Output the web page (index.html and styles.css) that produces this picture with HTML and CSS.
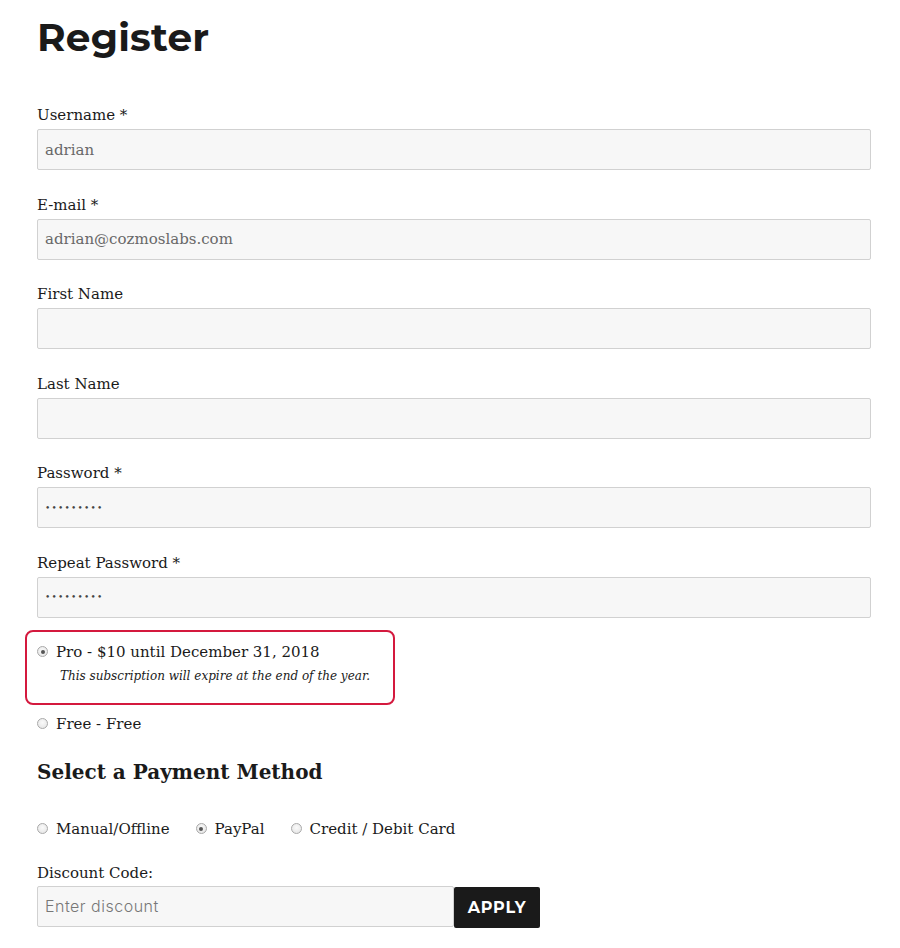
FILE: index.html
```html
<!DOCTYPE html>
<html lang="en">
<head>
<meta charset="utf-8">
<title>Register</title>
<link rel="stylesheet" href="styles.css">
</head>
<body>
<main class="page">
  <h1 class="title">Register</h1>
  <form class="form">
    <div class="field">
      <label class="label" for="u">Username *</label>
      <input class="input" id="u" type="text" value="adrian">
    </div>
    <div class="field">
      <label class="label" for="e">E-mail *</label>
      <input class="input" id="e" type="text" value="adrian@cozmoslabs.com">
    </div>
    <div class="field">
      <label class="label" for="f">First Name</label>
      <input class="input" id="f" type="text">
    </div>
    <div class="field">
      <label class="label" for="l">Last Name</label>
      <input class="input" id="l" type="text">
    </div>
    <div class="field">
      <label class="label" for="p">Password *</label>
      <input class="input pw" id="p" type="password" value="123456789">
    </div>
    <div class="field last">
      <label class="label" for="p2">Repeat Password *</label>
      <input class="input pw" id="p2" type="password" value="123456789">
    </div>

    <div class="plan highlighted">
      <label class="choice">
        <input class="radio" type="radio" name="plan" checked>
        <span>Pro - $10 until December 31, 2018</span>
      </label>
      <p class="plan-desc">This subscription will expire at the end of the year.</p>
    </div>
    <div class="plan plain">
      <label class="choice">
        <input class="radio" type="radio" name="plan">
        <span>Free - Free</span>
      </label>
    </div>

    <h2 class="subtitle">Select a Payment Method</h2>
    <div class="methods">
      <label class="choice"><input class="radio" type="radio" name="pay"><span>Manual/Offline</span></label>
      <label class="choice"><input class="radio" type="radio" name="pay" checked><span>PayPal</span></label>
      <label class="choice"><input class="radio" type="radio" name="pay"><span>Credit / Debit Card</span></label>
    </div>

    <div class="discount">
      <label class="label" for="d">Discount Code:</label>
      <div class="discount-row">
        <input class="input discount-input" id="d" type="text" placeholder="Enter discount">
        <button class="apply" type="button">APPLY</button>
      </div>
    </div>
  </form>
</main>
</body>
</html>
```

FILE: styles.css
```css
html, body {
  margin: 0;
  padding: 0;
  background: #fff;
}
body {
  font-family: "DejaVu Serif", "Liberation Serif", serif;
  color: #1a1a1a;
}
.page {
  padding: 0 29px 0 37px;
  width: 834px;
}
.title {
  font-family: "Montserrat", "Open Sans", "Inter", sans-serif;
  font-weight: 700;
  font-size: 39px;
  line-height: 44px;
  margin: 15px 0 0 0;
  letter-spacing: 0.2px;
  color: #1a1a1a;
}
.form {
  margin-top: 44px;
}
.field {
  margin-bottom: 22.5px;
}
.field.last {
  margin-bottom: 0;
}
.label {
  display: block;
  font-size: 15px;
  line-height: 24px;
  margin-bottom: 2px;
  color: #1a1a1a;
}
.input {
  display: block;
  box-sizing: border-box;
  width: 834px;
  height: 41px;
  margin: 0;
  padding: 0 7px;
  border: 1px solid #d1d1d1;
  border-radius: 2px;
  background: #f7f7f7;
  font-family: "DejaVu Serif", "Liberation Serif", serif;
  font-size: 15px;
  color: #686868;
  outline: none;
}
.input.pw {
  font-size: 9px;
  letter-spacing: 1.2px;
  color: #444;
}
.plan.highlighted {
  margin: 12px 0 0 -12px;
  width: 346px;
  border: 2px solid #d4193e;
  border-radius: 8px;
  padding: 8px 10px 16px 10px;
}
.choice {
  display: inline-flex;
  align-items: center;
  gap: 8px;
  font-size: 15px;
  line-height: 24px;
  color: #1a1a1a;
}
.plan-desc {
  margin: 1px 0 0 23px;
  font-size: 12px;
  font-style: italic;
  line-height: 22px;
  color: #1a1a1a;
}
.plan.plain {
  margin-top: 7px;
}
.radio {
  appearance: none;
  -webkit-appearance: none;
  box-sizing: border-box;
  width: 11px;
  height: 11px;
  margin: 0;
  border: 1px solid #a9a9a9;
  border-radius: 50%;
  background: radial-gradient(circle at 50% 40%, #fafafa 0%, #e2e2e2 100%);
  position: relative;
  flex: none;
}
.radio:checked::after {
  content: "";
  position: absolute;
  left: 2.5px;
  top: 2.5px;
  width: 4px;
  height: 4px;
  border-radius: 50%;
  background: #555;
}
.subtitle {
  font-size: 20px;
  font-weight: 700;
  line-height: 30px;
  margin: 21px 0 0 0;
  color: #1a1a1a;
}
.methods {
  display: flex;
  gap: 26px;
  margin-top: 30px;
}
.discount {
  margin-top: 20px;
}
.discount .label {
  margin-bottom: 1px;
}
.discount-row {
  display: flex;
  align-items: flex-start;
}
.discount-input {
  width: 417px;
  font-family: "Inter", "Open Sans", sans-serif;
  font-weight: 300;
  font-size: 16px;
  letter-spacing: 0.5px;
}
.discount-input::placeholder {
  color: #777;
}
.apply {
  width: 86px;
  height: 41px;
  margin: 1px 0 0 0;
  border: 0;
  border-radius: 2px;
  background: #1a1a1a;
  color: #fff;
  font-family: "Montserrat", "Open Sans", "Inter", sans-serif;
  font-weight: 700;
  font-size: 16px;
  letter-spacing: 0.8px;
}
```
